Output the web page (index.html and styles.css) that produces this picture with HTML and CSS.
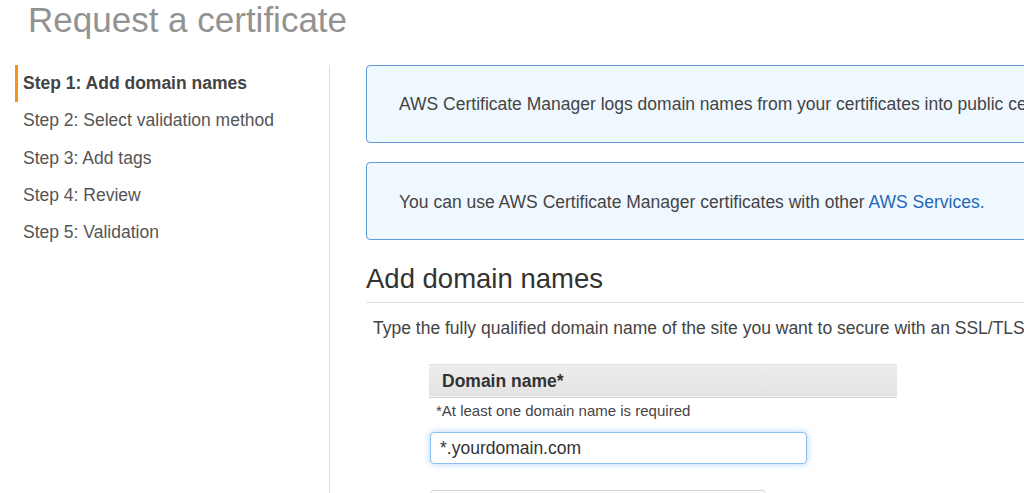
FILE: index.html
```html
<!DOCTYPE html>
<html>
<head>
<meta charset="utf-8">
<link rel="stylesheet" href="styles.css">
</head>
<body>
<div class="page">
  <h1 class="title">Request a certificate</h1>
  <div class="layout">
    <nav class="steps">
      <ul>
        <li class="step active">Step 1: Add domain names</li>
        <li class="step">Step 2: Select validation method</li>
        <li class="step">Step 3: Add tags</li>
        <li class="step">Step 4: Review</li>
        <li class="step">Step 5: Validation</li>
      </ul>
    </nav>
    <main class="content">
      <div class="info">AWS Certificate Manager logs domain names from your certificates into public certificate transparency (CT) logs. Learn more.</div>
      <div class="info">You can use AWS Certificate Manager certificates with other <a class="link" href="#">AWS Services.</a></div>
      <h2 class="section-title">Add domain names</h2>
      <p class="lead">Type the fully qualified domain name of the site you want to secure with an SSL/TLS certificate (for example, www.example.com).</p>
      <div class="domain-table">
        <div class="table-head">Domain name*</div>
        <div class="hint">*At least one domain name is required</div>
        <div class="input">*.yourdomain.com</div>
        <div class="add-row"></div>
      </div>
    </main>
  </div>
</div>
</body>
</html>
```

FILE: styles.css
```css
html, body {
  margin: 0;
  padding: 0;
  background: #fff;
  overflow: hidden;
}
body {
  font-family: "Liberation Sans", Arial, sans-serif;
  color: #444;
  width: 1024px;
  height: 493px;
}
.page {
  width: 1024px;
}
.title {
  margin: 0;
  padding-left: 28px;
  font-size: 35px;
  font-weight: normal;
  line-height: 40px;
  height: 65px;
  color: #929292;
}
.layout {
  display: flex;
  align-items: stretch;
  height: 428px;
}
.steps {
  flex: 0 0 329px;
  border-right: 1px solid #dcdcdc;
}
.steps ul {
  list-style: none;
  margin: 0;
  padding: 0;
}
.step {
  margin-left: 15px;
  padding: 7px 0 7px 5px;
  line-height: 23.3px;
  border-left: 3px solid transparent;
  font-size: 17.5px;
  color: #555;
  white-space: nowrap;
}
.step.active {
  border-left-color: #f7931e;
  font-weight: bold;
  color: #444;
}
.content {
  flex: 0 0 1000px;
  padding-left: 36px;
}
.info {
  box-sizing: border-box;
  height: 78px;
  padding: 27px 32px 0;
  line-height: 23px;
  font-size: 17.5px;
  color: #444;
  background: #f0f8ff;
  border: 1px solid #5f9bd8;
  border-radius: 4px;
  white-space: nowrap;
  overflow: hidden;
}
.info + .info {
  margin-top: 19px;
  padding-top: 28px;
}
.link {
  color: #2468b8;
  text-decoration: none;
}
.section-title {
  margin: 22px 0 0;
  padding-bottom: 7px;
  font-size: 27.5px;
  font-weight: normal;
  line-height: 33px;
  color: #333;
  border-bottom: 1px solid #dcdcdc;
}
.lead {
  margin: 14px 0 0 7px;
  font-size: 17.5px;
  line-height: 23px;
  color: #444;
  white-space: nowrap;
}
.domain-table {
  margin: 24px 0 0 63px;
  width: 468px;
}
.table-head {
  box-sizing: border-box;
  height: 34px;
  padding-left: 13px;
  line-height: 32px;
  font-size: 17.5px;
  font-weight: bold;
  color: #333;
  background: linear-gradient(#ededed, #e3e3e3);
  border-top: 1px solid #dedede;
  border-bottom: 1px solid #d0d0d0;
  box-shadow: inset 0 -1px 0 #f6f6f6;
}
.hint {
  padding: 4px 0 0 7px;
  font-size: 15px;
  line-height: 18px;
  color: #444;
}
.input {
  box-sizing: border-box;
  margin: 12px 0 0 1px;
  width: 377px;
  height: 32px;
  padding-left: 9px;
  line-height: 30px;
  font-size: 17.5px;
  color: #333;
  background: #fff;
  border: 1px solid #8cc0ee;
  border-radius: 4px;
  box-shadow: 0 0 6px rgba(102, 170, 238, 0.55);
}
.add-row {
  box-sizing: border-box;
  margin: 26px 0 0 1px;
  width: 336px;
  height: 40px;
  border: 1px solid #d4d4d4;
  border-radius: 4px;
}
```
